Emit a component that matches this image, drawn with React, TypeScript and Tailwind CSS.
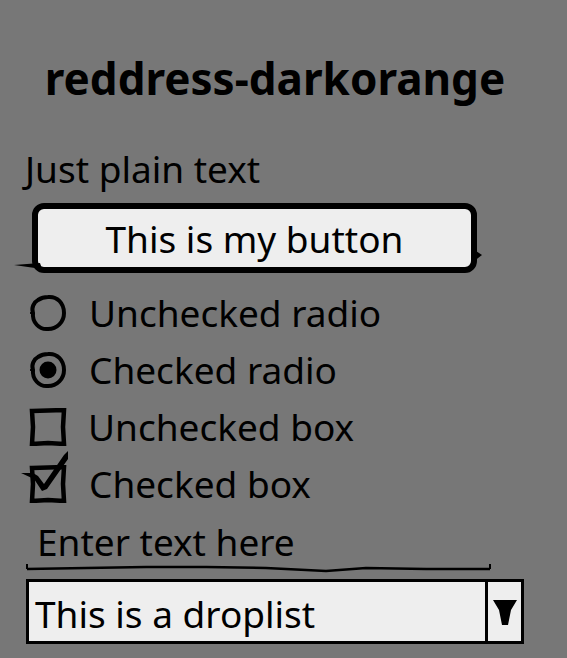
export default function App() {
  return (
    <div
      className="w-full h-[658px] bg-[#777777] text-black overflow-hidden"
      style={{ fontFamily: '"Noto Sans", "Open Sans", sans-serif' }}
    >
      <div className="w-[525px] pl-[25px] pt-[53px]">
        <h1 className="text-[44px] font-bold leading-[50px] text-center">
          reddress-darkorange
        </h1>

        <div className="mt-[44px] text-[37px] leading-[44px]">Just plain text</div>

        {/* button */}
        <div className="relative mt-[12px] ml-[7px] w-[445px]">
          <div className="h-[70px] border-[6px] border-black rounded-[12px] bg-[#eeeeee] text-[37px] leading-[56px] pt-[2px] text-center">
            This is my button
          </div>
          <svg className="absolute left-[-18px] top-[58px]" width="30" height="10" viewBox="0 0 30 10">
            <path d="M0 4 L26 2 L28 8 Z" fill="black" />
          </svg>
          <svg className="absolute right-[-6px] top-[46px]" width="10" height="14" viewBox="0 0 10 14">
            <path d="M0 0 L9 6 L0 13 Z" fill="black" />
          </svg>
        </div>

        <div className="mt-[11px] flex flex-col text-[37px] leading-[57px]">
          <div className="flex items-center gap-[21px] h-[57px]">
            <Radio checked={false} />
            <span>Unchecked radio</span>
          </div>
          <div className="flex items-center gap-[21px] h-[57px]">
            <Radio checked />
            <span>Checked radio</span>
          </div>
          <div className="flex items-center gap-[21px] h-[57px]">
            <Box checked={false} />
            <span>Unchecked box</span>
          </div>
          <div className="flex items-center gap-[22px] h-[57px]">
            <Box checked />
            <span>Checked box</span>
          </div>
        </div>

        {/* text field */}
        <div className="relative mt-[8px] ml-[1px] w-[465px]">
          <div className="pl-[11px] text-[37px] leading-[44px]">Enter text here</div>
          <svg width="465" height="10" viewBox="0 0 465 10" className="block">
            <polyline
              points="1,5 60,4 120,3 180,3 240,4 300,7 340,4 400,5 464,5"
              fill="none"
              stroke="black"
              strokeWidth="2.5"
            />
            <path d="M1 0 L1 5 M464 0 L464 5" stroke="black" strokeWidth="2" />
          </svg>
        </div>

        {/* droplist */}
        <div className="mt-[5px] ml-[1px] w-[498px] h-[65px] border-[3px] border-black bg-[#eeeeee] flex">
          <div className="flex-1 pl-[6px] text-[37px] leading-[58px] pt-[3px]">This is a droplist</div>
          <div className="w-[36px] border-l-[3px] border-black flex items-start justify-center pt-[16px]">
            <svg width="26" height="30" viewBox="0 0 26 30">
              <path d="M1 2 L25 2 L19 12 L16 27 L10 27 L7 12 Z" fill="black" />
            </svg>
          </div>
        </div>
      </div>
    </div>
  );
}

function Radio({ checked }: { checked: boolean }) {
  return (
    <svg width="40" height="38" viewBox="0 0 40 38" className="ml-[3px] shrink-0">
      <path
        d="M20 3 C29 2 36 9 36 19 C36 28 29 35 20 35 C11 36 4 28 5 19 C3 14 6 8 10 6 C13 4 16 3 20 3 Z"
        fill="none"
        stroke="black"
        strokeWidth="4"
      />
      <path d="M5 17 L2 19 L5 21" fill="black" stroke="black" strokeWidth="1" />
      {checked && <circle cx="20" cy="19" r="8.5" fill="black" />}
    </svg>
  );
}

function Box({ checked }: { checked: boolean }) {
  return (
    <div className="relative ml-[4px] w-[38px] h-[38px] shrink-0">
      <svg width="38" height="38" viewBox="0 0 38 38">
        <path
          d="M3 3 L35 2 L34 19 L35 36 L19 35 L3 36 L4 19 Z"
          fill="none"
          stroke="black"
          strokeWidth="4.5"
        />
      </svg>
      {checked && (
        <svg
          width="52"
          height="44"
          viewBox="0 0 52 44"
          className="absolute left-[-8px] top-[-14px]"
        >
          <path
            d="M0 22 L12 22 L17 25 L23 33 L43 4 L47 0 L47 8 L26 38 L21 40 L13 28 Z"
            fill="black"
          />
        </svg>
      )}
    </div>
  );
}
